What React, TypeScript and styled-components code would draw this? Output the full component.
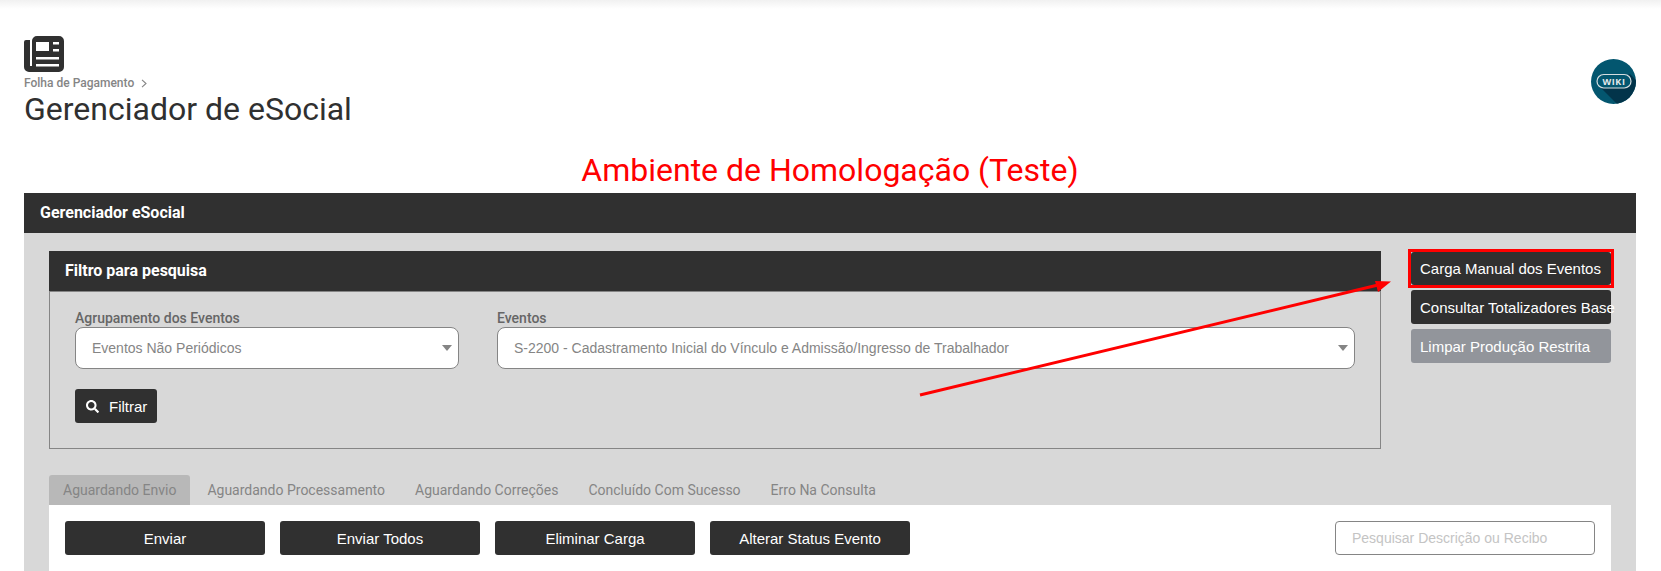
import React from 'react'
import styled, { createGlobalStyle } from 'styled-components'
import { FaSearch } from 'react-icons/fa'

const dark = '#303030'
const panel = '#d8d8d8'
const border = '#858585'

const GlobalStyle = createGlobalStyle`
  html, body {
    margin: 0;
    padding: 0;
    height: 571px;
    overflow: hidden;
    background: #fff;
    font-family: Roboto, sans-serif;
  }
  * {
    box-sizing: border-box;
  }
`

const Page = styled.div`
  position: relative;
  height: 571px;
  overflow: hidden;
  padding: 36px 25px 0 24px;
  background: linear-gradient(#f1f1f1 0, #fff 9px);
`

const Header = styled.header`
  display: flex;
  justify-content: space-between;
  align-items: flex-start;
  height: 111px;
`

const HeaderInfo = styled.div`
  display: flex;
  flex-direction: column;
`

const Logo = styled.svg`
  width: 40px;
  height: 36px;
  display: block;
`

const Breadcrumb = styled.div`
  display: flex;
  align-items: center;
  gap: 7px;
  margin-top: 4px;
  font-size: 12px;
  font-weight: 500;
  line-height: 14px;
  color: #858585;
`

const Title = styled.h1`
  margin: 0;
  font-size: 32px;
  font-weight: 400;
  line-height: 38px;
  color: ${dark};
`

const WikiBadge = styled.svg`
  width: 45px;
  height: 45px;
  margin-top: 23px;
  display: block;
`

const Environment = styled.div`
  height: 46px;
  text-align: center;
  font-size: 32px;
  line-height: 46px;
  color: #ff0000;
`

const Shell = styled.section`
  background: ${panel};
  height: 400px;
`

const ShellHeader = styled.div`
  height: 40px;
  padding-left: 16px;
  background: ${dark};
  color: #fff;
  font-size: 16px;
  font-weight: 700;
  line-height: 40px;
`

const ShellBody = styled.div`
  padding: 18px 25px 0 25px;
`

const TopRow = styled.div`
  display: flex;
  justify-content: space-between;
  align-items: flex-start;
  height: 224px;
`

const FilterBox = styled.div`
  width: 1332px;
  height: 198px;
  border: 1px solid ${border};
`

const FilterTitle = styled.div`
  height: 41px;
  margin: -1px -1px 0;
  padding-left: 16px;
  background: ${dark};
  border-bottom: 1px solid ${border};
  color: #fff;
  font-size: 16px;
  font-weight: 700;
  line-height: 40px;
`

const FilterBody = styled.div`
  padding: 18px 25px 0;
`

const FieldRow = styled.div`
  display: flex;
  gap: 38px;
`

const Field = styled.label<{ $width: number }>`
  display: block;
  width: ${({ $width }) => $width}px;
`

const FieldLabel = styled.div`
  height: 17px;
  font-size: 14px;
  font-weight: 500;
  line-height: 17px;
  color: #666;
`

const Select = styled.div`
  position: relative;
  height: 42px;
  padding-left: 16px;
  background: #fff;
  border: 1px solid ${border};
  border-radius: 8px;
  font-family: 'Liberation Sans', Arial, sans-serif;
  font-size: 14px;
  line-height: 40px;
  color: #858585;

  &::after {
    content: '';
    position: absolute;
    right: 6px;
    top: 17px;
    border-left: 5.5px solid transparent;
    border-right: 5.5px solid transparent;
    border-top: 6px solid #858585;
  }
`

const Button = styled.button`
  border: 0;
  border-radius: 3px;
  background: ${dark};
  color: #fff;
  font-family: 'Liberation Sans', Arial, sans-serif;
  font-size: 15px;
  padding: 0;
  height: 34px;
`

const FilterButton = styled(Button)`
  display: flex;
  align-items: center;
  gap: 10px;
  width: 82px;
  margin-top: 20px;
  padding-left: 11px;
`

const SearchGlyph = styled(FaSearch)`
  width: 13px;
  height: 13px;
`

const SideActions = styled.div`
  display: flex;
  flex-direction: column;
  gap: 5px;
  width: 200px;
`

const SideButton = styled(Button)<{ $muted?: boolean; $marked?: boolean }>`
  position: relative;
  display: block;
  width: 200px;
  height: ${({ $marked }) => ($marked ? 33 : 34)}px;
  margin-top: ${({ $marked }) => ($marked ? 1 : 0)}px;
  text-align: left;
  padding-left: 9px;
  white-space: nowrap;
  background: ${({ $muted }) => ($muted ? '#92959b' : dark)};

  ${({ $marked }) =>
    $marked
      ? `&::after {
    content: '';
    position: absolute;
    inset: -3px;
    border: 3px solid #ff0000;
  }`
      : ''}
`

const TabBar = styled.div`
  display: flex;
  height: 30px;
`

const Tab = styled.div<{ $active?: boolean }>`
  padding: 0 ${({ $active }) => ($active ? 14 : 13)}px 0 ${({ $active }) => ($active ? 14 : 17)}px;
  border-radius: 3px 3px 0 0;
  background: ${({ $active }) => ($active ? '#b8b8b8' : 'transparent')};
  font-size: 14px;
  line-height: 30px;
  color: #858585;
`

const TabContent = styled.div`
  display: flex;
  justify-content: space-between;
  height: 66px;
  padding: 16px 16px 0;
  background: #fff;
`

const ActionGroup = styled.div`
  display: flex;
  gap: 15px;
`

const ActionButton = styled(Button)`
  width: 200px;
`

const SearchInput = styled.input`
  width: 260px;
  height: 34px;
  padding: 0 16px;
  border: 1px solid ${border};
  border-radius: 4px;
  background: #fff;
  font-family: 'Liberation Sans', Arial, sans-serif;
  font-size: 14px;

  &::placeholder {
    color: #c4c4c4;
    opacity: 1;
  }
`

const ArrowOverlay = styled.svg`
  position: absolute;
  left: 0;
  top: 0;
  width: 1661px;
  height: 571px;
  pointer-events: none;
`

const tabs = [
  'Aguardando Processamento',
  'Aguardando Correções',
  'Concluído Com Sucesso',
  'Erro Na Consulta',
]

const actions = ['Enviar', 'Enviar Todos', 'Eliminar Carga', 'Alterar Status Evento']

export default function App() {
  return (
    <Page>
      <GlobalStyle />
      <Header>
        <HeaderInfo>
          <Logo viewBox="0 0 40 36">
            <path
              d="M13 0H35a5 5 0 0 1 5 5V31a5 5 0 0 1-5 5H5a5 5 0 0 1-5-5V6a2 2 0 0 1 2-2H6V30h2V5a5 5 0 0 1 5-5Z"
              fill={dark}
            />
            <rect x="12" y="6" width="13" height="9" fill="#fff" />
            <rect x="29" y="6" width="6" height="2.500" fill="#fff" />
            <rect x="29" y="13" width="6" height="2.500" fill="#fff" />
            <rect x="12" y="21" width="23" height="2.500" fill="#fff" />
            <rect x="12" y="28" width="23" height="2.500" fill="#fff" />
          </Logo>
          <Breadcrumb>
            Folha de Pagamento
            <svg width="6" height="9" viewBox="0 0 6 9" fill="none">
              <path d="M1 .8 5 4.5 1 8.2" stroke="#858585" strokeWidth="1.1" />
            </svg>
          </Breadcrumb>
          <Title>Gerenciador de eSocial</Title>
        </HeaderInfo>
        <WikiBadge viewBox="0 0 45 45">
          <defs>
            <clipPath id="wiki-clip">
              <circle cx="22.5" cy="22.5" r="22.5" />
            </clipPath>
          </defs>
          <circle cx="22.5" cy="22.5" r="22.5" fill="#03566f" />
          <path
            d="M9 28 L27 46 L46 46 L46 22 L39 15 Z"
            fill="#02344a"
            clipPath="url(#wiki-clip)"
          />
          <rect x="6" y="15.500" width="34" height="13.500" rx="6.700" fill="#03566f" stroke="#d5dde0" strokeWidth="1.200" />
          <text
            x="23"
            y="26"
            textAnchor="middle"
            fontFamily="'Open Sans', sans-serif"
            fontSize="9"
            fontWeight="700"
            letterSpacing="0.6"
            fill="#e4eaec"
          >
            WIKI
          </text>
        </WikiBadge>
      </Header>
      <Environment>Ambiente de Homologação (Teste)</Environment>
      <Shell>
        <ShellHeader>Gerenciador eSocial</ShellHeader>
        <ShellBody>
          <TopRow>
            <FilterBox>
              <FilterTitle>Filtro para pesquisa</FilterTitle>
              <FilterBody>
                <FieldRow>
                  <Field $width={384}>
                    <FieldLabel>Agrupamento dos Eventos</FieldLabel>
                    <Select>Eventos Não Periódicos</Select>
                  </Field>
                  <Field $width={858}>
                    <FieldLabel>Eventos</FieldLabel>
                    <Select>S-2200 - Cadastramento Inicial do Vínculo e Admissão/Ingresso de Trabalhador</Select>
                  </Field>
                </FieldRow>
                <FilterButton>
                  <SearchGlyph />
                  Filtrar
                </FilterButton>
              </FilterBody>
            </FilterBox>
            <SideActions>
              <SideButton $marked>Carga Manual dos Eventos</SideButton>
              <SideButton>Consultar Totalizadores Base</SideButton>
              <SideButton $muted>Limpar Produção Restrita</SideButton>
            </SideActions>
          </TopRow>
          <TabBar>
            <Tab $active>Aguardando Envio</Tab>
            {tabs.map((tab) => (
              <Tab key={tab}>{tab}</Tab>
            ))}
          </TabBar>
          <TabContent>
            <ActionGroup>
              {actions.map((action) => (
                <ActionButton key={action}>{action}</ActionButton>
              ))}
            </ActionGroup>
            <SearchInput placeholder="Pesquisar Descrição ou Recibo" />
          </TabContent>
        </ShellBody>
      </Shell>
      <ArrowOverlay viewBox="0 0 1661 571">
        <line x1="920" y1="395" x2="1378" y2="285" stroke="#ff0000" strokeWidth="3" />
        <path d="M1391 281.500 L1375 281 L1378 292 Z" fill="#ff0000" />
      </ArrowOverlay>
    </Page>
  )
}
